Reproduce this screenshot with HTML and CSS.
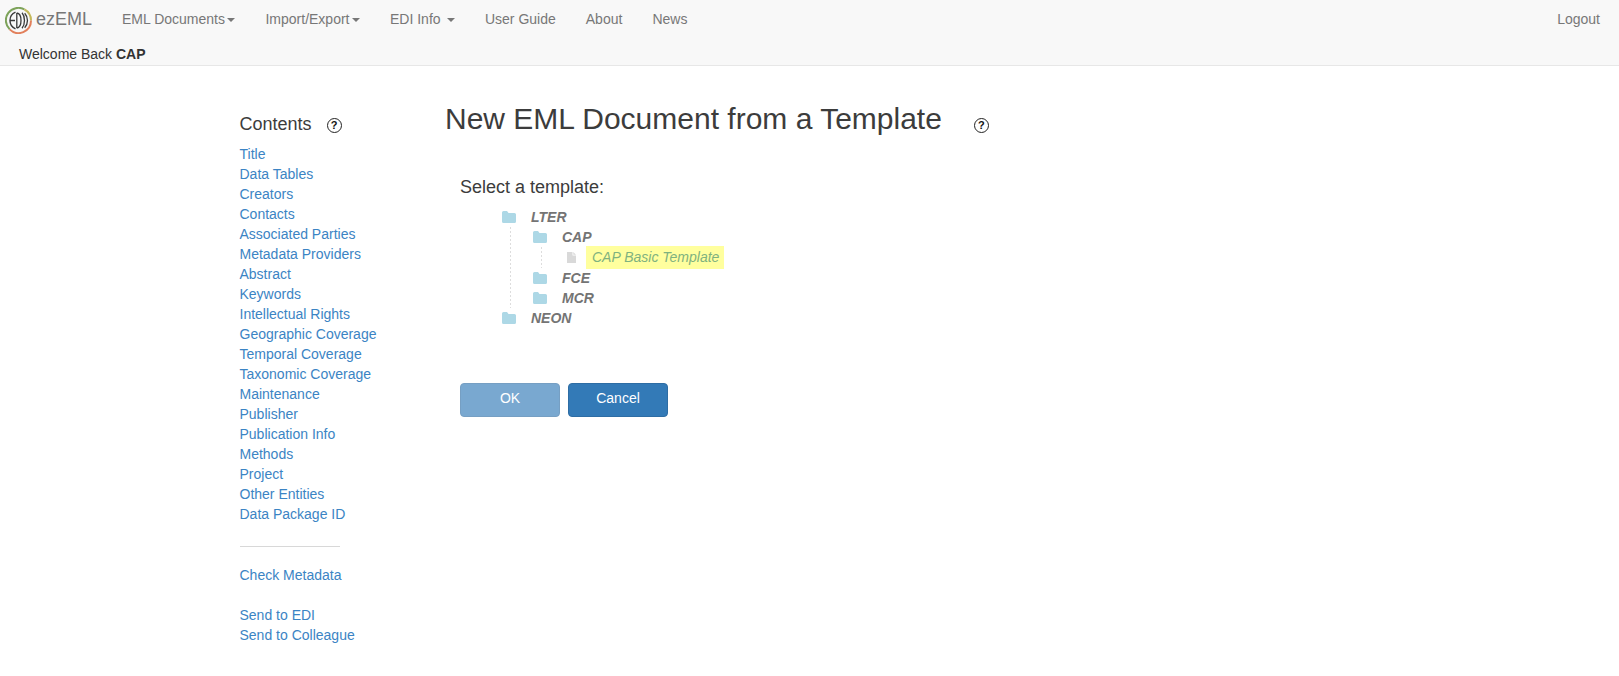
FILE: index.html
```html
<!DOCTYPE html>
<html lang="en">

<head>
    <meta charset="UTF-8">
    <meta name="viewport" content="width=device-width, initial-scale=1.0">
    <title>ezEML</title>
    <link rel="stylesheet" href="styles.css">
</head>

<body>
    <nav class="navbar">
        <div class="nav-row">
            <a class="brand" href="#">
                <svg class="logo" viewBox="0 0 27 27" width="27" height="27">
                    <path d="M4.700 22.400A12.500 12.500 0 0 1 19.500 2.500" fill="none" stroke="#7da35a" stroke-width="2"/>
                    <path d="M19.500 2.500A12.500 12.500 0 0 1 26 13.500" fill="none" stroke="#c4b85a" stroke-width="2"/>
                    <path d="M26 13.500A12.500 12.500 0 0 1 4.700 22.400" fill="none" stroke="#e2805c" stroke-width="2"/>
                    <path d="M10.500 5.200A9 9 0 0 0 10.500 21.800M5 13.500H10" fill="none" stroke="#3a3a3a" stroke-width="1.400"/>
                    <path d="M11.800 6V21M11.800 6C17.400 6.500 17.400 20.500 11.800 21" fill="none" stroke="#3a3a3a" stroke-width="1.300"/>
                    <path d="M17 5.800C20.300 9.500 20.300 17.500 17 21.200M19.700 6.300C23.400 10.500 23.400 16.500 19.700 20.700" fill="none" stroke="#3a3a3a" stroke-width="1.300"/>
                </svg>
                <span>ezEML</span>
            </a>
            <ul class="nav-links">
                <li><a href="#">EML Documents<span class="caret"></span></a></li>
                <li><a href="#">Import/Export<span class="caret"></span></a></li>
                <li><a href="#">EDI Info <span class="caret"></span></a></li>
                <li><a href="#">User Guide</a></li>
                <li><a href="#">About</a></li>
                <li><a href="#">News</a></li>
            </ul>
            <a class="logout" href="#">Logout</a>
        </div>
        <div class="welcome">Welcome Back <b>CAP</b></div>
    </nav>

    <div class="page">
        <aside class="sidebar">
            <h4 class="contents-title">Contents <span class="help small-gap">?</span></h4>
            <ul class="toc">
                <li><a href="#">Title</a></li>
                <li><a href="#">Data Tables</a></li>
                <li><a href="#">Creators</a></li>
                <li><a href="#">Contacts</a></li>
                <li><a href="#">Associated Parties</a></li>
                <li><a href="#">Metadata Providers</a></li>
                <li><a href="#">Abstract</a></li>
                <li><a href="#">Keywords</a></li>
                <li><a href="#">Intellectual Rights</a></li>
                <li><a href="#">Geographic Coverage</a></li>
                <li><a href="#">Temporal Coverage</a></li>
                <li><a href="#">Taxonomic Coverage</a></li>
                <li><a href="#">Maintenance</a></li>
                <li><a href="#">Publisher</a></li>
                <li><a href="#">Publication Info</a></li>
                <li><a href="#">Methods</a></li>
                <li><a href="#">Project</a></li>
                <li><a href="#">Other Entities</a></li>
                <li><a href="#">Data Package ID</a></li>
            </ul>
            <hr class="toc-rule">
            <ul class="toc">
                <li><a href="#">Check Metadata</a></li>
                <li class="toc-gap"><a href="#">Send to EDI</a></li>
                <li><a href="#">Send to Colleague</a></li>
            </ul>
        </aside>

        <main class="content">
            <div class="heading">
                <h2>New EML Document from a Template</h2>
                <span class="help">?</span>
            </div>
            <div class="picker">
                <h4 class="picker-label">Select a template:</h4>
                <ul class="tree">
                    <li class="tree-row branch">
                        <svg class="folder" viewBox="0 0 14 12"><path d="M1.500 0H5L6.500 2H12.500A1.500 1.500 0 0 1 14 3.500V10.500A1.500 1.500 0 0 1 12.500 12H1.500A1.500 1.500 0 0 1 0 10.500V1.500A1.500 1.500 0 0 1 1.500 0Z"/></svg>
                        <span class="node">LTER</span>
                    </li>
                    <li>
                        <ul class="tree nested">
                            <li class="tree-row branch">
                                <svg class="folder" viewBox="0 0 14 12"><path d="M1.500 0H5L6.500 2H12.500A1.500 1.500 0 0 1 14 3.500V10.500A1.500 1.500 0 0 1 12.500 12H1.500A1.500 1.500 0 0 1 0 10.500V1.500A1.500 1.500 0 0 1 1.500 0Z"/></svg>
                                <span class="node">CAP</span>
                            </li>
                            <li>
                                <ul class="tree nested leafs">
                                    <li class="tree-row">
                                        <svg class="doc" viewBox="0 0 9 11"><path d="M0 0H5.500V3.500H9V11H0ZM6.300 0L9 2.700H6.300Z"/></svg>
                                        <span class="node selected">CAP Basic Template</span>
                                    </li>
                                </ul>
                            </li>
                            <li class="tree-row branch">
                                <svg class="folder" viewBox="0 0 14 12"><path d="M1.500 0H5L6.500 2H12.500A1.500 1.500 0 0 1 14 3.500V10.500A1.500 1.500 0 0 1 12.500 12H1.500A1.500 1.500 0 0 1 0 10.500V1.500A1.500 1.500 0 0 1 1.500 0Z"/></svg>
                                <span class="node">FCE</span>
                            </li>
                            <li class="tree-row branch">
                                <svg class="folder" viewBox="0 0 14 12"><path d="M1.500 0H5L6.500 2H12.500A1.500 1.500 0 0 1 14 3.500V10.500A1.500 1.500 0 0 1 12.500 12H1.500A1.500 1.500 0 0 1 0 10.500V1.500A1.500 1.500 0 0 1 1.500 0Z"/></svg>
                                <span class="node">MCR</span>
                            </li>
                        </ul>
                    </li>
                    <li class="tree-row branch">
                        <svg class="folder" viewBox="0 0 14 12"><path d="M1.500 0H5L6.500 2H12.500A1.500 1.500 0 0 1 14 3.500V10.500A1.500 1.500 0 0 1 12.500 12H1.500A1.500 1.500 0 0 1 0 10.500V1.500A1.500 1.500 0 0 1 1.500 0Z"/></svg>
                        <span class="node">NEON</span>
                    </li>
                </ul>
                <div class="buttons">
                    <button class="btn disabled">OK</button>
                    <button class="btn">Cancel</button>
                </div>
            </div>
        </main>
    </div>
</body>

</html>
```

FILE: styles.css
```css
* {
    box-sizing: border-box;
}

body {
    margin: 0;
    font-family: "Liberation Sans", Arial, sans-serif;
    font-size: 14px;
    line-height: 20px;
    color: #333;
    background-color: #fff;
}

a {
    text-decoration: none;
    color: #3b84c4;
}

ul {
    list-style: none;
    margin: 0;
    padding: 0;
}

.navbar {
    height: 66px;
    background-color: #f8f8f8;
    border-bottom: 1px solid #e7e7e7;
}

.nav-row {
    display: flex;
    align-items: center;
    height: 38px;
}

.brand {
    display: flex;
    align-items: center;
    gap: 4px;
    margin-left: 5px;
    width: 102px;
    font-size: 18px;
    color: #777;
}

.logo {
    flex: none;
    margin-top: 3px;
}

.nav-links {
    display: flex;
}

.nav-links a {
    display: block;
    padding: 0 15px;
    color: #777;
}

.caret {
    display: inline-block;
    width: 0;
    height: 0;
    margin-left: 2.5px;
    vertical-align: middle;
    border-top: 4px solid #777;
    border-right: 4px solid transparent;
    border-left: 4px solid transparent;
}

.logout {
    margin-left: auto;
    margin-right: 19px;
    color: #777;
}

.welcome {
    padding: 6px 0 0 19px;
    color: #333;
}

.page {
    display: flex;
    padding-left: 239.5px;
}

.sidebar {
    width: 205.5px;
    padding-top: 48px;
}

.contents-title {
    margin: 0 0 10px;
    font-size: 18px;
    font-weight: 400;
    line-height: 20px;
    color: #3c3c3c;
}

.help {
    display: inline-block;
    width: 15px;
    height: 15px;
    border: 1px solid #222;
    border-radius: 50%;
    font-size: 11px;
    font-weight: 700;
    line-height: 13px;
    text-align: center;
    color: #111;
    vertical-align: middle;
}

.small-gap {
    margin-left: 10px;
    margin-top: 1px;
}

.toc-rule {
    width: 100px;
    margin: 22px 0 18px;
    border: 0;
    border-top: 1px solid #d8d8d8;
}

.toc-gap {
    margin-top: 20px;
}

.content {
    flex: 1;
}

.heading {
    display: flex;
    align-items: flex-start;
    padding-top: 36px;
}

.heading h2 {
    margin: 0;
    font-size: 30px;
    font-weight: 500;
    line-height: 33px;
    color: #3c3c3c;
}

.heading .help {
    margin: 16px 0 0 32px;
}

.picker {
    padding: 42px 0 0 15px;
}

.picker-label {
    margin: 0 0 10px;
    font-size: 18px;
    font-weight: 400;
    line-height: 20px;
    color: #3c3c3c;
}

.tree {
    padding-left: 42px;
    font-size: 14px;
}

.nested {
    padding-left: 31px;
    background: linear-gradient(#ddd 50%, transparent 50%) 8px 0 / 1px 4px repeat-y;
}

.tree-row {
    display: flex;
    align-items: center;
    height: 20.2px;
    gap: 15px;
}

.tree .leafs {
    padding-left: 34px;
}

.tree-row .doc + .node {
    margin-left: -5px;
}

.folder {
    width: 14px;
    height: 12px;
    fill: #add8e6;
    flex: none;
}

.doc {
    width: 9px;
    height: 11px;
    fill: #d9d9d9;
    flex: none;
}

.node {
    font-style: italic;
    font-weight: 700;
    color: #747474;
}

.node.selected {
    padding: 0 5px 0 6px;
    height: 23px;
    line-height: 23px;
    font-weight: 400;
    color: #7fb27f;
    background-color: #ffff9e;
}

.buttons {
    display: flex;
    gap: 8px;
    margin-top: 55px;
}

.btn {
    width: 100px;
    height: 34px;
    padding: 0 0 4px;
    font-family: inherit;
    font-size: 14px;
    color: #fff;
    background-color: #337ab7;
    border: 1px solid #2e6da4;
    border-radius: 4px;
}

.btn.disabled {
    opacity: 0.65;
}
```
